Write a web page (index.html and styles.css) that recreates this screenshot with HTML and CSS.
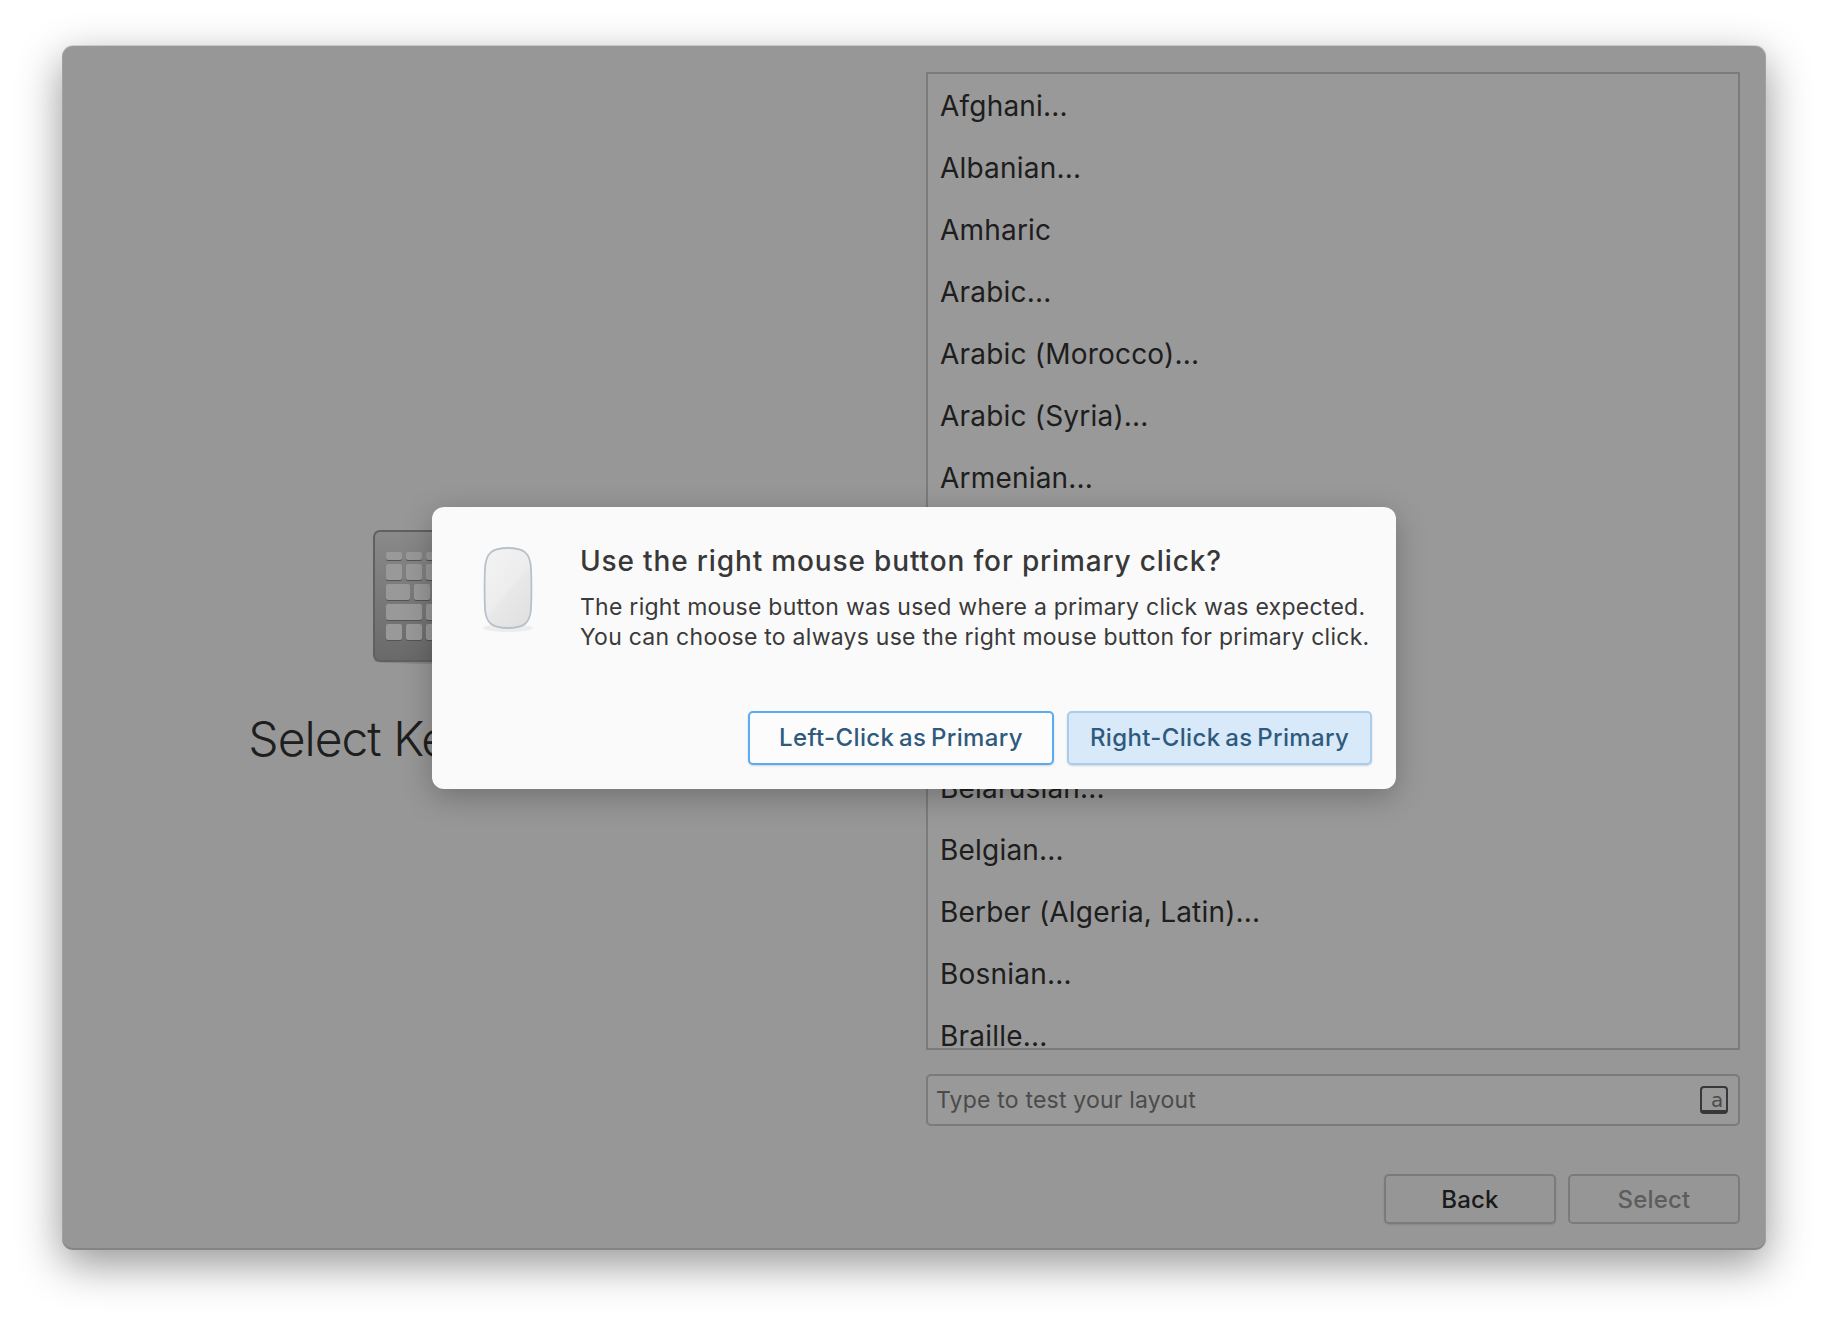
FILE: index.html
```html
<!DOCTYPE html>
<html lang="en">
<head>
<meta charset="utf-8">
<title>Select Keyboard</title>
<link rel="stylesheet" href="styles.css">
</head>
<body>
<div class="window">
  <div class="content">
    <section class="intro">
      <svg class="kbd-icon" width="132" height="134" viewBox="0 0 132 134">
        <defs>
          <linearGradient id="kb" x1="0" y1="0" x2="0" y2="1">
            <stop offset="0" stop-color="#e6e6e6"/>
            <stop offset="1" stop-color="#b0b0b0"/>
          </linearGradient>
          <g id="keys">
            <rect x="13" y="22" width="16" height="8" rx="2"/><rect x="33" y="22" width="16" height="8" rx="2"/><rect x="53" y="22" width="16" height="8" rx="2"/>
            <rect x="13" y="34" width="16" height="16" rx="2"/><rect x="33" y="34" width="16" height="16" rx="2"/><rect x="53" y="34" width="16" height="16" rx="2"/>
            <rect x="13" y="54" width="24" height="16" rx="2"/><rect x="41" y="54" width="16" height="16" rx="2"/>
            <rect x="13" y="74" width="36" height="16" rx="2"/><rect x="53" y="74" width="16" height="16" rx="2"/>
            <rect x="13" y="94" width="16" height="16" rx="2"/><rect x="33" y="94" width="16" height="16" rx="2"/><rect x="53" y="94" width="16" height="16" rx="2"/>
          </g>
        </defs>
        <ellipse cx="66" cy="131" rx="66" ry="3" fill="#000" opacity=".12"/>
        <rect x="1" y="1" width="130" height="130" rx="6" fill="url(#kb)" stroke="#a0a0a0" stroke-width="2"/>
        <use href="#keys" y="1" fill="#8c8c8c"/>
        <use href="#keys" fill="#ffffff"/>
      </svg>
      <h1 class="intro-title">Select Keyboard</h1>
    </section>
    <section class="picker">
      <ul class="layouts">
        <li>Afghani...</li>
        <li>Albanian...</li>
        <li>Amharic</li>
        <li>Arabic...</li>
        <li>Arabic (Morocco)...</li>
        <li>Arabic (Syria)...</li>
        <li>Armenian...</li>
        <li>Assamese...</li>
        <li>Azerbaijani...</li>
        <li>Bangla...</li>
        <li>Bashkir...</li>
        <li>Belarusian...</li>
        <li>Belgian...</li>
        <li>Berber (Algeria, Latin)...</li>
        <li>Bosnian...</li>
        <li>Braille...</li>
      </ul>
      <div class="test-input">
        <span>Type to test your layout</span>
        <span class="kbd-badge">a</span>
      </div>
      <div class="actions">
        <button class="btn">Back</button>
        <button class="btn btn-disabled">Select</button>
      </div>
    </section>
  </div>
  <div class="scrim"></div>
  <div class="dialog">
    <div class="dialog-body">
      <svg class="mouse-icon" width="54" height="88" viewBox="0 0 54 88">
        <defs>
          <linearGradient id="ms" x1="0.15" y1="0" x2="0.85" y2="1">
            <stop offset="0" stop-color="#f3f3f4"/>
            <stop offset="0.5" stop-color="#ededee"/>
            <stop offset="0.56" stop-color="#e8e8e9"/>
            <stop offset="1" stop-color="#e0e0e1"/>
          </linearGradient>
        </defs>
        <ellipse cx="27" cy="82" rx="25" ry="4" fill="#000" opacity=".05"/>
        <path d="M27 2 C43 2 49 7 50 22 C50.600 36 50.600 49 50 63 C49 77 43 82 27 82 C11 82 5 77 4 63 C3.400 49 3.400 36 4 22 C5 7 11 2 27 2 Z" fill="url(#ms)" stroke="#b7c1ca" stroke-width="1.8"/>
      </svg>
      <div class="dialog-text">
        <h2 class="dialog-title">Use the right mouse button for primary click?</h2>
        <p class="dialog-msg">The right mouse button was used where a primary click was expected.<br>You can choose to always use the right mouse button for primary click.</p>
      </div>
    </div>
    <div class="dialog-actions">
      <button class="dlg-btn dlg-btn-focus">Left-Click as Primary</button>
      <button class="dlg-btn dlg-btn-suggested">Right-Click as Primary</button>
    </div>
  </div>
</div>
</body>
</html>
```
FILE: styles.css
```css
* { box-sizing: border-box; }
html, body { margin: 0; height: 100%; background: #fff; }
body {
  padding: 46px 62px 78px;
  font-family: Inter, "Noto Sans", sans-serif;
  overflow: hidden;
}
.window {
  position: relative;
  width: 1704px;
  height: 1204px;
  border-radius: 11px;
  background: #fcfcfc;
  box-shadow: 0 14px 44px rgba(0,0,0,.42);
}
.content {
  display: flex;
  height: 100%;
  padding: 26px 26px 26px 0;
}
.intro {
  width: 754px;
  margin-right: 110px;
  display: flex;
  flex-direction: column;
  align-items: center;
  padding-top: 458px;
}
.kbd-icon { display: block; }
.intro-title {
  margin: 46px 0 0;
  padding-right: 32px;
  font-size: 48px;
  font-weight: 300;
  line-height: 58px;
  letter-spacing: -1px;
  color: #333;
  white-space: nowrap;
}
.picker {
  flex: 1;
  display: flex;
  flex-direction: column;
}
.layouts {
  margin: 0;
  padding: 1px 0 0 12px;
  list-style: none;
  height: 978px;
  overflow: hidden;
  background: #fff;
  border: 2px solid #cdcdcd;
  font-size: 28px;
  letter-spacing: .2px;
  color: #333;
}
.layouts li {
  height: 62px;
  line-height: 62px;
  white-space: nowrap;
}
.test-input {
  margin-top: 24px;
  height: 52px;
  padding: 0 10px 0 8px;
  display: flex;
  align-items: center;
  justify-content: space-between;
  background: #fff;
  border: 2px solid #cdcdcd;
  border-radius: 5px;
  font-size: 23px;
  letter-spacing: .2px;
  color: #7d7d7d;
}
.kbd-badge {
  width: 28px;
  height: 28px;
  padding-left: 9px;
  border: 2px solid #5c5c5c;
  border-bottom-width: 4px;
  border-radius: 4px;
  font-family: "DejaVu Sans", sans-serif;
  font-size: 20px;
  line-height: 25px;
  letter-spacing: 0;
  color: #7d7d7d;
}
.actions {
  margin-top: 48px;
  display: flex;
  justify-content: flex-end;
  gap: 12px;
}
.btn {
  width: 172px;
  height: 50px;
  padding: 1px 0 0;
  background: #fbfbfb;
  border: 2px solid #cdcdcd;
  border-radius: 5px;
  box-shadow: 0 1px 2px rgba(0,0,0,.12);
  font: 500 24px Inter, sans-serif;
  letter-spacing: .2px;
  color: #2e2e2e;
}
.btn-disabled {
  color: #9c9c9c;
  box-shadow: none;
}
.scrim {
  position: absolute;
  inset: 0;
  border-radius: 11px;
  background: rgba(0,0,0,.4);
  box-shadow: inset 0 -2px 0 rgba(0,0,0,.12), inset 1px 0 0 rgba(255,255,255,.1), inset -1px 0 0 rgba(255,255,255,.1), 0 -1px 0 rgba(0,0,0,.12);
}
.dialog {
  position: absolute;
  left: 370px;
  top: 461px;
  width: 964px;
  height: 282px;
  background: #fafafa;
  border-radius: 12px;
  box-shadow: 0 8px 30px rgba(0,0,0,.25);
  display: flex;
  flex-direction: column;
}
.dialog-body {
  display: flex;
  align-items: flex-start;
  padding: 36px 24px 0 49px;
}
.mouse-icon { display: block; flex: none; margin: 3px 45px 0 0; }
.dialog-title {
  margin: 0;
  font-size: 28px;
  font-weight: 500;
  line-height: 36px;
  letter-spacing: .85px;
  color: #383838;
  white-space: nowrap;
}
.dialog-msg {
  margin: 13px 0 0;
  font-size: 23px;
  line-height: 30px;
  letter-spacing: .26px;
  color: #3a3a3a;
  white-space: nowrap;
}
.dialog-actions {
  margin-top: auto;
  padding: 0 24px 24px 0;
  display: flex;
  justify-content: flex-end;
  gap: 13px;
}
.dlg-btn {
  width: 305px;
  height: 54px;
  padding: 0 0 2px;
  border-radius: 5px;
  font: 500 24px Inter, sans-serif;
  letter-spacing: .35px;
  word-spacing: -2px;
  color: #2f5a7d;
  box-shadow: 0 1px 2px rgba(0,0,0,.15);
}
.dlg-btn-focus {
  width: 306px;
  background: #fcfcfc;
  border: 2px solid #5aabf0;
}
.dlg-btn-suggested {
  background: #d8e9fa;
  border: 2px solid #a8cdee;
}
```
